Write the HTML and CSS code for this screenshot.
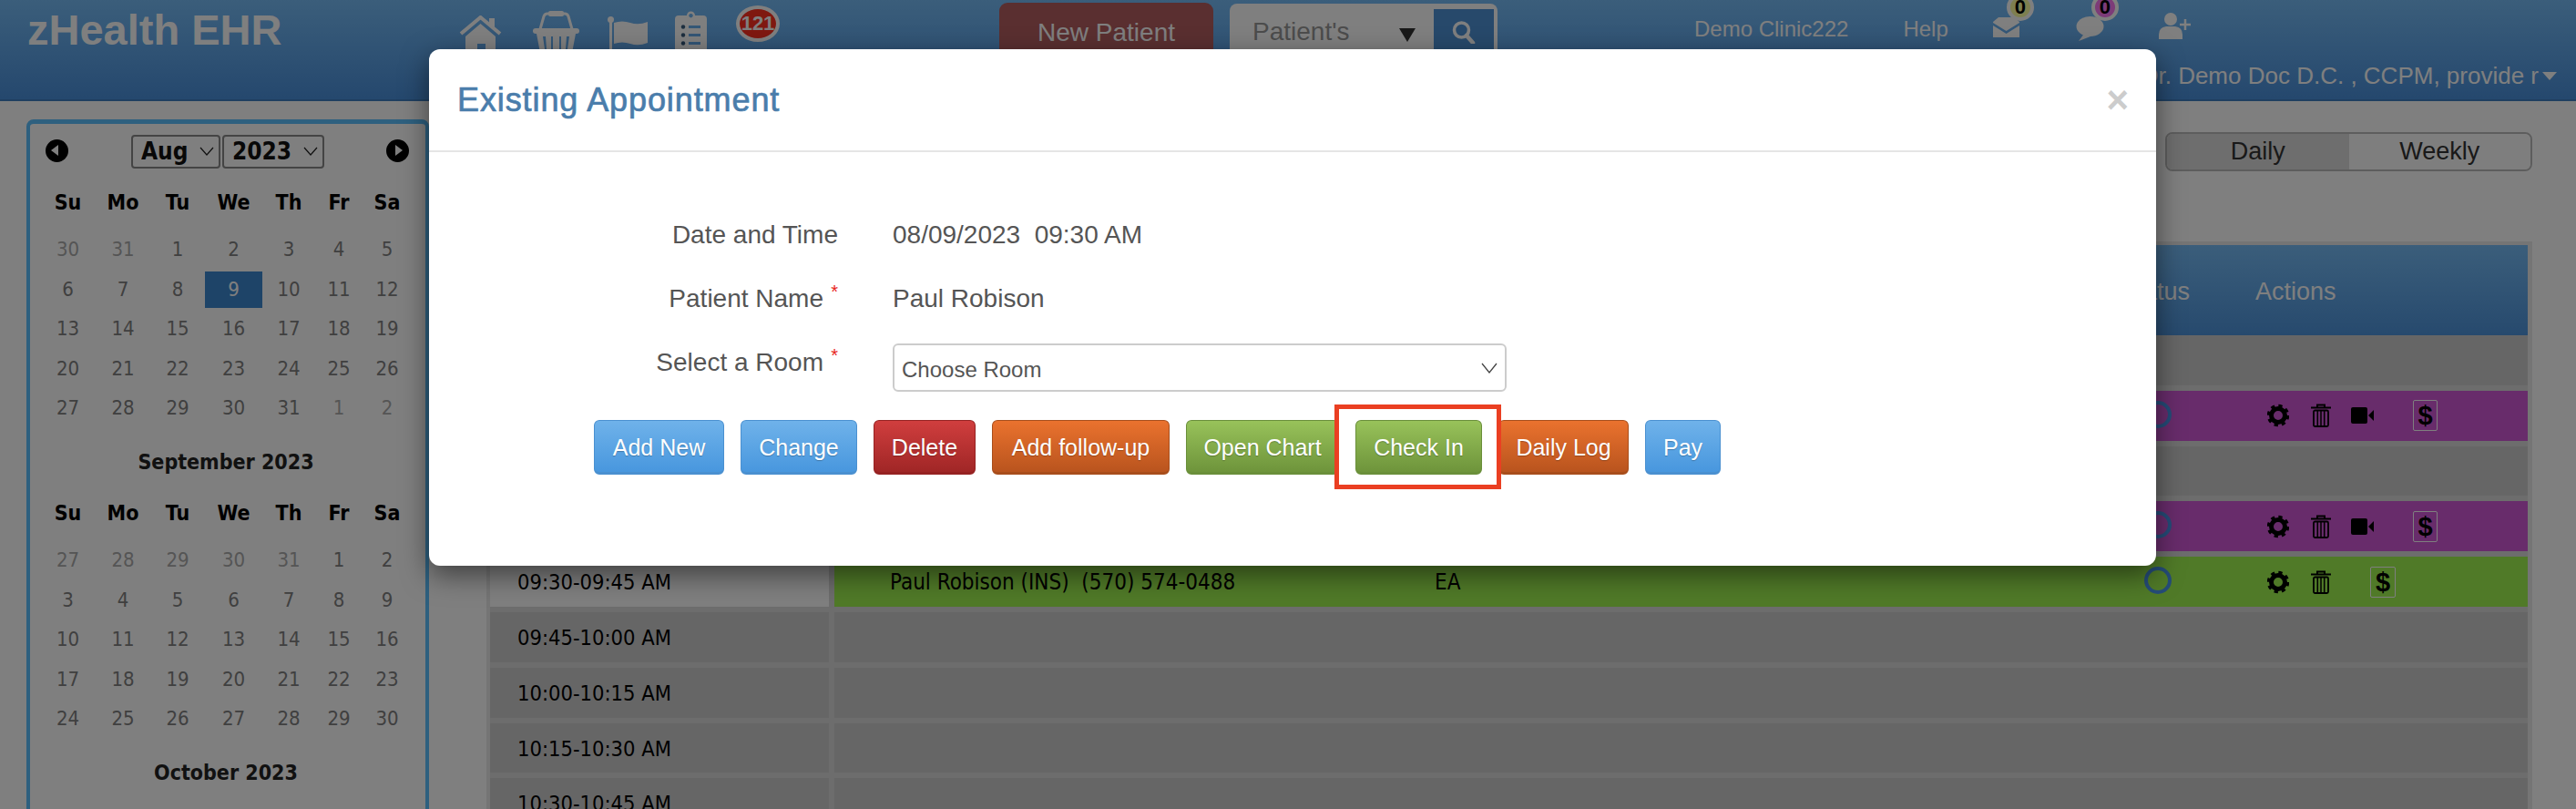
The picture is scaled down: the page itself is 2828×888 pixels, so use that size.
FILE: index.html
```html
<!DOCTYPE html>
<html lang="en">
<head>
    <meta charset="UTF-8">
    <title>zHealth EHR</title>
    <link rel="stylesheet" href="styles.css">
</head>
<body>
    <svg class="defs" width="0" height="0">
        <symbol id="gear" viewBox="0 0 24 28">
            <circle cx="12" cy="14" r="7.500" fill="none" stroke="#000" stroke-width="5"/>
            <circle cx="12" cy="14" r="10.500" fill="none" stroke="#000" stroke-width="3.500" stroke-dasharray="4.200 4.050"/>
        </symbol>
        <symbol id="trash" viewBox="0 0 22 26">
            <path d="M7 4V1.500h8V4M0 4.500h22" fill="none" stroke="#000" stroke-width="2"/>
            <rect x="3" y="7.500" width="16" height="17.500" rx="1.500" fill="none" stroke="#000" stroke-width="1.800"/>
            <path d="M7.300 8v16M11 8v16M14.700 8v16" stroke="#000" stroke-width="1.500"/>
        </symbol>
        <symbol id="video" viewBox="0 0 26 18">
            <rect x="0" y="0" width="18" height="18" rx="2" fill="#000"/>
            <path d="M19 9l6-6v12z" fill="#000"/>
        </symbol>
    </svg>

    <header class="app-header">
        <div class="topbar">
            <div class="brand">zHealth EHR</div>
            <nav class="nav-icons">
                <svg class="ic-home" width="47" height="46" viewBox="0 0 47 46">
                    <path d="M2 20L23.500 2 45 20" fill="none" stroke="#fff" stroke-width="4"/>
                    <path d="M33 3h6v12l-6-5z" fill="#fff"/>
                    <path d="M23.500 9L40 23v23H29V31h-9v15H7V23z" fill="#fff"/>
                </svg>
                <svg class="ic-basket" width="51" height="46" viewBox="0 0 51 46">
                    <path d="M8 20L12 6q1-3 4-3h19q3 0 4 3l4 14" fill="none" stroke="#fff" stroke-width="3"/>
                    <rect x="17" y="0" width="17" height="6" rx="2" fill="#fff"/>
                    <rect x="0" y="19" width="51" height="6" rx="3" fill="#fff"/>
                    <path fill-rule="evenodd" d="M4 25h43l-4 21H8zM11 28l2 14h2l-1-14zM20 28v14h2V28zM29 28v14h2V28zM37 28l-1 14h2l2-14z" fill="#fff"/>
                </svg>
                <svg class="ic-flag" width="45" height="40" viewBox="0 0 45 40">
                    <circle cx="3.500" cy="3.500" r="3.500" fill="#fff"/>
                    <rect x="2" y="4" width="3" height="36" fill="#fff"/>
                    <path d="M7 7q9-3 18 0t19-1v23q-10 4-19 1T7 30z" fill="#fff"/>
                </svg>
                <svg class="ic-clip" width="35" height="46" viewBox="0 0 35 46">
                    <path fill-rule="evenodd" d="M4 5h9a4.500 4.500 0 0 1 9 0h9q4 0 4 4v37H0V9q0-4 4-4zM17.500 3a2.200 2.200 0 1 0 .01 0zM15 16v3h13v-3zM15 25v3h13v-3zM15 34v3h13v-3z" fill="#fff"/>
                    <circle cx="9" cy="17.500" r="2.200" fill="#3a5f80"/>
                    <circle cx="9" cy="26.500" r="2.200" fill="#365a7c"/>
                    <circle cx="9" cy="35.500" r="2.200" fill="#32567a"/>
                </svg>
                <span class="count-pill">121</span>
            </nav>
            <button class="new-patient">New Patient</button>
            <div class="search-box">
                <span class="search-type">Patient's</span>
                <span class="search-caret"></span>
                <span class="search-btn">
                    <svg width="26" height="25" viewBox="0 0 26 25">
                        <circle cx="10.500" cy="10" r="8" fill="none" stroke="#fff" stroke-width="3.500"/>
                        <path d="M16 16l7 8" stroke="#fff" stroke-width="4.500" stroke-linecap="round"/>
                    </svg>
                </span>
            </div>
            <span class="clinic">Demo Clinic222</span>
            <span class="help">Help</span>
            <span class="alert-icon mail">
                <svg width="29" height="23" viewBox="0 0 29 23">
                    <path d="M0 6l6-5 17 0 6 5v1L14.500 16 0 7zM0 10l14.500 9L29 10v13H0z" fill="#fff"/>
                </svg>
                <span class="dot dot-olive">0</span>
            </span>
            <span class="alert-icon chat">
                <svg width="31" height="27" viewBox="0 0 31 27">
                    <ellipse cx="15.500" cy="11" rx="15" ry="11" fill="#fff"/>
                    <path d="M9 19L3 27l13-5z" fill="#fff"/>
                </svg>
                <span class="dot dot-purple">0</span>
            </span>
            <svg class="ic-adduser" width="36" height="30" viewBox="0 0 36 30">
                <circle cx="13" cy="8" r="7" fill="#fff"/>
                <path d="M0 30v-5q0-8 8-9h10q8 1 8 9v5z" fill="#fff"/>
                <path d="M29 8v12M23 14h12" stroke="#fff" stroke-width="2.500"/>
            </svg>
        </div>
        <div class="user-line">Dr. Demo Doc D.C. , CCPM, provide r<span class="user-caret"></span></div>
    </header>

    <div class="page">
        <aside class="calendar">
            <section class="month">
                <div class="month-title cal-nav">
                    <span class="cal-arrow prev"></span>
                    <select class="cal-select sel-month"><option>Aug</option></select>
                    <select class="cal-select sel-year"><option>2023</option></select>
                    <span class="cal-arrow next"></span>
                </div>
                <div class="week-names"><span>Su</span><span>Mo</span><span>Tu</span><span>We</span><span>Th</span><span>Fr</span><span>Sa</span></div>
                <div class="days">
                    <span class="off">30</span><span class="off">31</span><span>1</span><span>2</span><span>3</span><span>4</span><span>5</span>
                    <span>6</span><span>7</span><span>8</span><span class="today">9</span><span>10</span><span>11</span><span>12</span>
                    <span>13</span><span>14</span><span>15</span><span>16</span><span>17</span><span>18</span><span>19</span>
                    <span>20</span><span>21</span><span>22</span><span>23</span><span>24</span><span>25</span><span>26</span>
                    <span>27</span><span>28</span><span>29</span><span>30</span><span>31</span><span class="off">1</span><span class="off">2</span>
                </div>
            </section>
            <section class="month">
                <div class="month-title">September 2023</div>
                <div class="week-names"><span>Su</span><span>Mo</span><span>Tu</span><span>We</span><span>Th</span><span>Fr</span><span>Sa</span></div>
                <div class="days">
                    <span class="off">27</span><span class="off">28</span><span class="off">29</span><span class="off">30</span><span class="off">31</span><span>1</span><span>2</span>
                    <span>3</span><span>4</span><span>5</span><span>6</span><span>7</span><span>8</span><span>9</span>
                    <span>10</span><span>11</span><span>12</span><span>13</span><span>14</span><span>15</span><span>16</span>
                    <span>17</span><span>18</span><span>19</span><span>20</span><span>21</span><span>22</span><span>23</span>
                    <span>24</span><span>25</span><span>26</span><span>27</span><span>28</span><span>29</span><span>30</span>
                </div>
            </section>
            <section class="month">
                <div class="month-title">October 2023</div>
            </section>
        </aside>

        <main class="main">
            <div class="view-toggle">
                <span class="toggle-item active">Daily</span>
                <span class="toggle-item">Weekly</span>
            </div>
            <div class="schedule">
                <div class="schedule-head">
                    <span class="head-status">Status</span>
                    <span class="head-actions">Actions</span>
                </div>
                <div class="schedule-rows">
                    <div class="time">08:30-08:45 AM</div>
                    <div class="slot"></div>

                    <div class="time">08:45-09:00 AM</div>
                    <div class="slot purple">
                        <span class="name"></span><span class="prov"></span>
                        <span class="status-ring"></span>
                        <span class="actions">
                            <svg class="a-gear"><use href="#gear"/></svg>
                            <svg class="a-trash"><use href="#trash"/></svg>
                            <svg class="a-video"><use href="#video"/></svg>
                            <span class="pay-box">$</span>
                        </span>
                    </div>

                    <div class="time">09:00-09:15 AM</div>
                    <div class="slot"></div>

                    <div class="time">09:15-09:30 AM</div>
                    <div class="slot purple">
                        <span class="name"></span><span class="prov"></span>
                        <span class="status-ring"></span>
                        <span class="actions">
                            <svg class="a-gear"><use href="#gear"/></svg>
                            <svg class="a-trash"><use href="#trash"/></svg>
                            <svg class="a-video"><use href="#video"/></svg>
                            <span class="pay-box">$</span>
                        </span>
                    </div>

                    <div class="time current">09:30-09:45 AM</div>
                    <div class="slot green">
                        <span class="name">Paul Robison (INS) &nbsp;(570) 574-0488</span><span class="prov">EA</span>
                        <span class="status-ring"></span>
                        <span class="actions">
                            <svg class="a-gear"><use href="#gear"/></svg>
                            <svg class="a-trash"><use href="#trash"/></svg>
                            <span class="pay-box wide">$</span>
                        </span>
                    </div>

                    <div class="time">09:45-10:00 AM</div>
                    <div class="slot"></div>
                    <div class="time">10:00-10:15 AM</div>
                    <div class="slot"></div>
                    <div class="time">10:15-10:30 AM</div>
                    <div class="slot"></div>
                    <div class="time">10:30-10:45 AM</div>
                    <div class="slot"></div>
                </div>
            </div>
        </main>
    </div>

    <div class="backdrop"></div>

    <div class="modal">
        <div class="modal-header">
            <h4 class="modal-title">Existing Appointment</h4>
            <span class="modal-close">&times;</span>
        </div>
        <div class="modal-body">
            <div class="form-row">
                <label class="form-label">Date and Time</label>
                <div class="form-value">08/09/2023 &nbsp;09:30 AM</div>
            </div>
            <div class="form-row">
                <label class="form-label">Patient Name<sup class="req">*</sup></label>
                <div class="form-value">Paul Robison</div>
            </div>
            <div class="form-row room-row">
                <label class="form-label">Select a Room<sup class="req">*</sup></label>
                <select class="room-select"><option>Choose Room</option></select>
            </div>
            <div class="button-row">
                <button class="btn btn-blue btn-addnew">Add New</button>
                <button class="btn btn-blue btn-change">Change</button>
                <button class="btn btn-red btn-delete">Delete</button>
                <button class="btn btn-orange btn-follow">Add follow-up</button>
                <button class="btn btn-green btn-chart">Open Chart</button>
                <button class="btn btn-green btn-checkin">Check In</button>
                <button class="btn btn-orange btn-log">Daily Log</button>
                <button class="btn btn-blue btn-pay">Pay</button>
            </div>
        </div>
        <div class="callout"></div>
    </div>
</body>
</html>
```

FILE: styles.css
```css
* {
    box-sizing: border-box;
}
html, body {
    margin: 0;
    height: 888px;
    overflow: hidden;
}
body {
    position: relative;
    background: #fff;
    font-family: "Liberation Sans", Arial, sans-serif;
    color: #333;
}
.defs {
    position: absolute;
}

/* header */
.app-header {
    height: 111px;
    background: linear-gradient(#76bcf6, #4a90dc);
    border-bottom: 2px solid #3f7fc0;
    color: #fff;
}
.topbar {
    display: flex;
    align-items: flex-start;
    height: 68px;
    padding-left: 30px;
}
.brand {
    width: 474px;
    padding-top: 6px;
    font-size: 47px;
    font-weight: bold;
    line-height: 54px;
}
.nav-icons {
    display: flex;
    align-items: flex-start;
    width: 593px;
}
.ic-home { margin: 17px 34px 0 0; }
.ic-basket { margin: 12px 31px 0 0; }
.ic-flag { margin: 18px 29px 0 0; }
.ic-clip { margin: 12px 32px 0 0; }
.count-pill {
    width: 48px;
    height: 40px;
    margin-top: 6px;
    border: 4px solid #fff;
    border-radius: 50%;
    background: #ff3020;
    font-size: 22px;
    font-weight: bold;
    line-height: 32px;
    text-align: center;
}
.new-patient {
    width: 235px;
    height: 68px;
    margin-top: 3px;
    border: none;
    border-radius: 9px;
    background: #b45e60;
    color: #fff;
    font: 28px "Liberation Sans", Arial, sans-serif;
    padding-bottom: 4px;
}
.search-box {
    display: flex;
    width: 294px;
    height: 68px;
    margin: 4px 0 0 18px;
    border-radius: 8px;
    background: #fff;
    padding: 6px 3px 0 25px;
}
.search-type {
    width: 141px;
    padding-top: 3px;
    color: #999;
    font-size: 28px;
    line-height: 44px;
}
.search-caret {
    width: 0;
    height: 0;
    margin: 21px 0 0 20px;
    border-left: 9px solid transparent;
    border-right: 9px solid transparent;
    border-top: 15px solid #333;
}
.search-btn {
    display: flex;
    justify-content: center;
    width: 66px;
    margin-left: 20px;
    padding-top: 13px;
    background: #4f92d6;
}
.clinic {
    margin: 17px 0 0 216px;
    font-size: 24px;
    line-height: 30px;
}
.help {
    margin: 17px 0 0 60px;
    font-size: 24px;
    line-height: 30px;
}
.alert-icon {
    position: relative;
    display: block;
}
.mail {
    margin: 18px 0 0 49px;
}
.chat {
    margin: 18px 0 0 62px;
}
.dot {
    position: absolute;
    top: -25px;
    right: -16px;
    width: 30px;
    height: 30px;
    border: 4px solid #fff;
    border-radius: 50%;
    color: #000;
    font-size: 22px;
    font-weight: bold;
    line-height: 22px;
    text-align: center;
}
.dot-olive {
    background: #fcffa0;
}
.dot-purple {
    background: #f876f0;
}
.ic-adduser {
    margin: 13px 0 0 60px;
}
.user-line {
    display: flex;
    justify-content: flex-end;
    align-items: center;
    height: 30px;
    padding-right: 21px;
    font-size: 26px;
    white-space: nowrap;
}
.user-caret {
    width: 0;
    height: 0;
    margin-left: 4px;
    border-left: 8px solid transparent;
    border-right: 8px solid transparent;
    border-top: 9px solid #fff;
}

/* page */
.page {
    display: flex;
    align-items: flex-start;
}

/* calendar */
.calendar {
    flex: none;
    width: 442px;
    height: 800px;
    margin: 20px 0 0 29px;
    padding: 10px 0 0 11px;
    border: 4px solid #5cc0ff;
    border-top-width: 5px;
    border-radius: 8px 8px 0 0;
    font-family: "DejaVu Sans", "Noto Sans", sans-serif;
    font-stretch: condensed;
    background: #fff;
}
.month {
    margin-bottom: 19px;
    width: 408px;
}
.month-title {
    height: 40px;
    color: #222;
    font-size: 23px;
    font-weight: bold;
    line-height: 40px;
    text-align: center;
}
.cal-nav {
    position: relative;
    display: flex;
    justify-content: center;
    align-items: center;
    gap: 2px;
    padding-left: 4px;
}
.cal-select {
    appearance: none;
    height: 37px;
    padding: 0 0 0 9px;
    border: 2px solid #888;
    border-radius: 4px;
    color: #111;
    font: bold 26px "DejaVu Sans", sans-serif;
    font-stretch: condensed;
    background: #fff url("data:image/svg+xml;utf8,<svg xmlns='http://www.w3.org/2000/svg' width='16' height='10'><path d='M1 1l7 8 7-8' fill='none' stroke='%23222' stroke-width='1.200'/></svg>") no-repeat right 5px center;
}
.sel-month { width: 98px; }
.sel-year { width: 112px; }
.cal-arrow {
    position: absolute;
    top: 7px;
    width: 25px;
    height: 25px;
    border-radius: 50%;
    background: #000;
}
.cal-arrow::after {
    content: "";
    position: absolute;
    top: 6px;
    border-top: 6px solid transparent;
    border-bottom: 6px solid transparent;
}
.cal-arrow.prev { left: 6px; }
.cal-arrow.prev::after {
    left: 6px;
    border-right: 8px solid #fff;
}
.cal-arrow.next { right: 3px; }
.cal-arrow.next::after {
    left: 10px;
    border-left: 8px solid #fff;
}
.week-names,
.days {
    display: grid;
    grid-template-columns: 61px 60px 60px 63px 58px 52px 54px;
    text-align: center;
}
.week-names {
    height: 36px;
    margin-top: 18px;
    color: #000;
    font-size: 23px;
    font-weight: bold;
    line-height: 36px;
}
.days {
    grid-auto-rows: 40px;
    row-gap: 3.5px;
    margin-top: 14px;
    color: #808080;
    font-size: 22px;
    line-height: 40px;
}
.days .off {
    color: #aaa;
}
.days .today {
    background: #3c88d0;
    color: #fff;
}

/* schedule */
.main {
    flex: none;
    width: 2246px;
    margin-left: 63px;
    padding-top: 34px;
}
.view-toggle {
    display: flex;
    width: 403px;
    height: 43px;
    margin-left: auto;
    border: 2px solid #bbb;
    border-radius: 8px;
    overflow: hidden;
    color: #333;
    font-size: 27px;
    line-height: 39px;
    text-align: center;
}
.toggle-item {
    flex: 1;
    background: #fcfcfc;
}
.toggle-item.active {
    background: #dcdcdc;
}
.schedule {
    margin-top: 77px;
    padding: 4px 5px 0 4px;
    background: #eaeaea;
}
.schedule-head {
    position: relative;
    height: 99px;
    background: linear-gradient(#76bcf6, #4e94dc);
    color: #fff;
    font-size: 27px;
    line-height: 102px;
}
.head-status {
    position: absolute;
    right: 371px;
}
.head-actions {
    position: absolute;
    left: 1938px;
}
.schedule-rows {
    display: grid;
    grid-template-columns: 372px 1fr;
    grid-auto-rows: 54.8px;
    gap: 6px;
    background: #dadada;
    height: 540px;
}
.time {
    padding-left: 30px;
    background: #ccc;
    color: #000;
    font-family: "DejaVu Sans", "Noto Sans", sans-serif;
    font-stretch: condensed;
    font-size: 23.500px;
    line-height: 56px;
}
.time.current {
    background: #fff;
}
.slot {
    display: grid;
    grid-template-columns: 598px 779px 135px 1fr;
    align-items: center;
    padding-left: 61px;
    background: #ccc;
    color: #000;
    font-family: "DejaVu Sans", "Noto Sans", sans-serif;
    font-stretch: condensed;
    font-size: 24px;
}
.slot.purple {
    background: #d058d6;
}
.slot.green {
    background: #a0f450;
}
.status-ring {
    width: 30px;
    height: 30px;
    border: 4px solid #4a98f0;
    border-radius: 50%;
    margin-top: -3px;
}
.actions {
    display: flex;
    align-items: center;
    height: 100%;
}
.a-gear {
    width: 24px;
    height: 28px;
    margin-right: 24px;
}
.a-trash {
    width: 22px;
    height: 26px;
    margin-right: 22px;
}
.a-video {
    width: 26px;
    height: 18px;
    margin-right: 42px;
}
.pay-box {
    width: 27px;
    height: 34px;
    border: 1px solid #fff;
    border-radius: 2px;
    font: bold 29px/32px "Liberation Sans", sans-serif;
    text-align: center;
}
.pay-box.wide {
    width: 28px;
    margin-left: 21px;
}

/* modal */
.backdrop {
    position: absolute;
    inset: 0;
    background: rgba(0, 0, 0, 0.5);
}
.modal {
    position: absolute;
    top: 54px;
    left: 471px;
    width: 1896px;
    height: 567px;
    border-radius: 12px;
    background: #fff;
    box-shadow: 0 10px 30px rgba(0, 0, 0, 0.5);
}
.modal-header {
    display: flex;
    justify-content: space-between;
    align-items: center;
    height: 113px;
    padding: 0 30px 0 31px;
    border-bottom: 2px solid #e5e5e5;
}
.modal-title {
    margin: 0;
    color: #4a7dab;
    font-size: 36px;
    font-weight: normal;
    letter-spacing: 0.9px;
    -webkit-text-stroke: 0.7px #4a7dab;
}
.modal-close {
    color: #ccc;
    font-size: 42px;
    font-weight: bold;
}
.modal-body {
    padding-top: 70px;
    color: #555;
}
.form-row {
    display: grid;
    grid-template-columns: 449px 1fr;
    column-gap: 60px;
    height: 40px;
    margin-bottom: 30px;
    font-size: 28px;
    line-height: 41px;
}
.form-label {
    text-align: right;
}
.form-row .req {
    display: inline-block;
    width: 16px;
    color: #e8261c;
    font-size: 20px;
    line-height: 0;
    vertical-align: 10px;
}
.room-row {
    height: 53px;
    margin-bottom: 31px;
}
.room-select {
    appearance: none;
    width: 674px;
    height: 53px;
    padding: 4px 0 0 8px;
    border: 2px solid #ccc;
    border-radius: 6px;
    color: #555;
    font: 24px "Liberation Sans", Arial, sans-serif;
    background: #fff url("data:image/svg+xml;utf8,<svg xmlns='http://www.w3.org/2000/svg' width='18' height='12'><path d='M1 1l8 10 8-10' fill='none' stroke='%23444' stroke-width='1.300'/></svg>") no-repeat right 8px center;
}
.button-row {
    display: flex;
    gap: 18px;
    margin-left: 181px;
}
.btn {
    height: 60px;
    padding: 2px 0 0;
    border: 1px solid;
    border-bottom-width: 3px;
    border-radius: 6px;
    color: #fff;
    font: 25px "Liberation Sans", Arial, sans-serif;
    text-shadow: 0 1px 1px rgba(0, 0, 0, 0.25);
}
.btn-blue {
    border-color: #4a90d0;
    background: linear-gradient(#6fb2ea, #4897de);
}
.btn-red {
    border-color: #962222;
    background: linear-gradient(#d03e3e, #a02626);
}
.btn-orange {
    border-color: #a84e1c;
    background: linear-gradient(#ea722e, #b9541e);
}
.btn-green {
    border-color: #6a8f3a;
    background: linear-gradient(#98c25a, #6e943b);
}
.btn-addnew { width: 143px; }
.btn-change { width: 128px; }
.btn-delete { width: 112px; }
.btn-follow { width: 195px; }
.btn-chart { width: 168px; }
.btn-checkin { width: 139px; }
.btn-log { width: 143px; }
.btn-pay { width: 83px; }
.callout {
    position: absolute;
    top: 390px;
    left: 994px;
    width: 183px;
    height: 93px;
    border: 5px solid #ea3f22;
}
```
